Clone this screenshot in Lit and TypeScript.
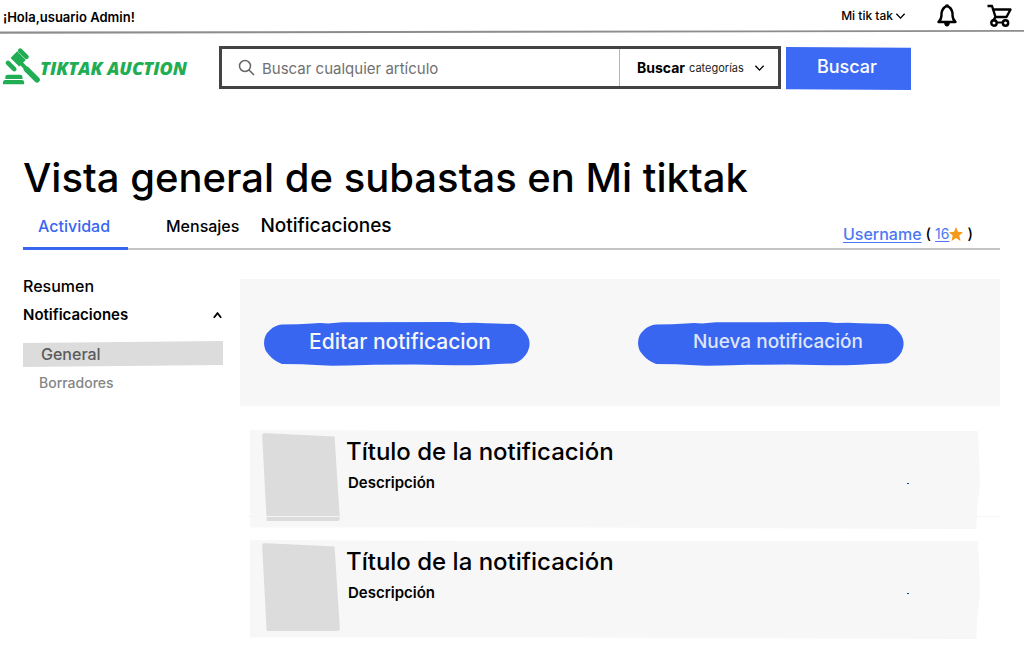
import { LitElement, html, css, svg, nothing } from "lit";
import { customElement, property } from "lit/decorators.js";

const chevronDown = html`<svg class="chev" viewBox="0 0 12 8" aria-hidden="true">
  <path d="M1.5 1.5 6 6.3 10.5 1.5" fill="none" stroke="currentColor" stroke-width="1.5" />
</svg>`;

const gavel = html`<svg class="gavel" viewBox="0 0 112 112" aria-hidden="true">
  <g fill="none" stroke="currentColor" stroke-linecap="round">
    <path d="M52 8 71 27M15 45 34 64" stroke-width="14" />
    <path d="M54 46 66 58" stroke-width="12" />
    <path d="M71 64 103 96" stroke-width="17" />
  </g>
  <path d="M43 10 69 36 49 56 23 30Z" fill="currentColor" />
  <path d="M14 81H52Q59 81 59 88V94H7V88Q7 81 14 81ZM7 97H57Q64 97 64 104V110H0V104Q0 97 7 97Z" fill="currentColor" />
</svg>`;

const pill = svg`<path d="M18 3.500 34 3.300 48 2.500 56 2 64 2.400 78 1.300 188 1 198 2 210 1.800 222 2.300 232 2.600 250 3Q256 5 261 11Q266 17 265.500 24Q265 31 259 37Q254 42 248 42.500L234 43 222 43.800 208 44.300 190 44.200 150 43.600 110 43.800 84 44.400 68 44.800 52 44 38 43.300 18 43Q10 40 5 34Q0 29 0 22Q0 14 6 9Q11 4 18 3.500Z" fill="currentColor" />`;

@customElement("notification-card")
export class NotificationCard extends LitElement {
  @property() heading = "";
  @property() description = "";
  @property({ type: Boolean }) ruled = false;

  static styles = css`
    :host {
      display: block;
      position: relative;
    }
    .card {
      display: flex;
      gap: 6px;
      min-height: 99px;
      box-sizing: border-box;
      padding: 3px 12px;
      background: #f7f7f7;
      clip-path: polygon(0 0, 40% 1px, 99.7% 1px, 99.8% 12%, 100% 55%, 99.6% 80%, 99.5% 100%, 45% 98.5%, 0 98.5%);
    }
    .thumb {
      flex: none;
      width: 78px;
      height: 88px;
      border-radius: 3px;
      background: #dcdcdc;
      clip-path: polygon(0 0, 93% 4%, 100% 100%, 6% 100%);
    }
    .text {
      flex: 1;
      display: flex;
      flex-direction: column;
      gap: 4px;
    }
    .title {
      margin: 0;
      padding-top: 4px;
      font-size: 24px;
      line-height: 30px;
      font-weight: 500;
    }
    .desc {
      margin: 0;
      display: flex;
      align-items: center;
      justify-content: space-between;
      padding: 0 59px 0 2px;
      font-size: 15px;
      line-height: 24px;
      font-weight: 600;
    }
    .mark {
      width: 2px;
      height: 1px;
      background: #124a86;
    }
    .line {
      position: absolute;
      left: -2px;
      right: -20px;
      bottom: 12px;
      height: 1px;
      background: #f5f5f5;
    }
  `;

  render() {
    return html`<article class="card">
        <div class="thumb"></div>
        <div class="text">
          <h2 class="title">${this.heading}</h2>
          <p class="desc">${this.description}<span class="mark"></span></p>
        </div>
      </article>
      ${this.ruled ? html`<div class="line"></div>` : nothing}`;
  }
}

@customElement("app-root")
export class AppRoot extends LitElement {
  static styles = css`
    :host {
      display: block;
      min-height: 100vh;
      background: #fff;
      color: #000;
      font-family: Inter, "Liberation Sans", sans-serif;
    }
    a {
      color: inherit;
      text-decoration: none;
    }
    button {
      border: 0;
      padding: 0;
      background: none;
      color: inherit;
      font: inherit;
      cursor: pointer;
    }
    .topbar {
      display: flex;
      align-items: center;
      height: 30px;
      padding: 0 11px 0 3px;
    }
    .hello {
      flex: 1;
      padding-top: 4px;
      font-size: 13px;
      line-height: 18px;
      font-weight: 600;
    }
    .account {
      display: flex;
      align-items: center;
      gap: 2px;
      margin-right: 30px;
      padding-top: 1px;
      font-size: 12px;
      line-height: 18px;
      font-weight: 500;
    }
    .chev {
      width: 11px;
      height: 8px;
    }
    .icon {
      display: block;
      height: 24px;
    }
    .bell {
      width: 22px;
      margin-right: 29px;
    }
    .cart {
      width: 26px;
    }
    .rule {
      height: 4px;
      background: #8d8d8d;
      clip-path: polygon(0 40%, 100% 0, 100% 45%, 0 95%);
    }
    .header {
      display: flex;
      align-items: center;
      padding: 12px 113px 0 3px;
    }
    .logo {
      display: flex;
      align-items: center;
      width: 216px;
      color: #21ad54;
      font-family: "Open Sans", Lato, sans-serif;
      font-size: 18px;
      line-height: 24px;
      font-weight: 800;
      font-style: italic;
      white-space: nowrap;
    }
    .gavel {
      flex: none;
      overflow: visible;
      width: 37px;
      height: 37px;
      margin-top: -4px;
    }
    .search {
      flex: 1;
      display: flex;
      gap: 5px;
    }
    .box {
      flex: 1;
      display: flex;
      box-sizing: border-box;
      height: 43px;
      border: 3px solid #434343;
    }
    .query {
      flex: 1;
      display: flex;
      align-items: center;
      gap: 7px;
      padding-left: 16px;
    }
    .lens {
      width: 17px;
      height: 17px;
      color: #666;
    }
    .field {
      flex: 1;
      min-width: 0;
      border: 0;
      padding: 2px 0 0;
      outline: 0;
      background: none;
      font: 400 15px/20px Inter, sans-serif;
      color: #333;
    }
    .field::placeholder {
      color: #707070;
      opacity: 1;
    }
    .cats {
      display: flex;
      align-items: center;
      width: 159px;
      box-sizing: border-box;
      padding: 0 13px 0 17px;
      border-left: 1px solid #b5b5b5;
      font-size: 12px;
      line-height: 18px;
    }
    .catlabel {
      font-size: 14px;
      font-weight: 700;
      margin-right: 4px;
    }
    .select {
      flex: 1;
      min-width: 0;
      appearance: none;
      border: 0;
      padding: 0;
      background: none;
      color: #222;
      font: 400 11px/18px Inter, sans-serif;
    }
    .go {
      width: 125px;
      height: 43px;
      margin-top: 1px;
      background: #3d6af4;
      color: #fff;
      font-size: 18px;
      font-weight: 500;
      padding: 0 3px 4px 0;
      clip-path: polygon(0 0, 100% 2%, 100% 100%, 0 98%);
    }
    .main {
      padding: 62px 24px 24px 23px;
    }
    .h1 {
      margin: 0;
      font-size: 40px;
      line-height: 52px;
      font-weight: 500;
    }
    .tabs {
      display: flex;
      align-items: flex-end;
      justify-content: space-between;
      height: 44px;
      border-bottom: 2px solid #c4c4c4;
    }
    .tablist {
      display: flex;
      align-items: flex-start;
      height: 46px;
      margin-bottom: -2px;
      font-size: 19px;
      line-height: 24px;
      font-weight: 500;
    }
    .tab {
      box-sizing: border-box;
      height: 46px;
      padding-top: 10px;
      margin-right: 21px;
    }
    .small {
      font-size: 16px;
    }
    .active {
      width: 105px;
      margin-right: 38px;
      padding-left: 15px;
      border-bottom: 3px solid #3866f0;
      color: #3866f0;
    }
    .user {
      display: flex;
      align-items: center;
      padding: 0 27px 3px 0;
      font-size: 15px;
      line-height: 22px;
      font-weight: 500;
      white-space: pre;
    }
    .link {
      color: #4b77f3;
      text-decoration: underline;
      text-underline-offset: 2px;
    }
    .name {
      font-size: 16px;
    }
    .thin {
      font-size: 14px;
      font-weight: 400;
    }
    .star {
      width: 14px;
      height: 14px;
      color: #f39a1b;
    }
    .body {
      display: grid;
      grid-template-columns: 200px minmax(0, 1fr);
      gap: 17px;
      padding-top: 29px;
    }
    .side {
      font-size: 16px;
      line-height: 20px;
      font-weight: 500;
    }
    .item {
      display: flex;
      align-items: center;
      justify-content: space-between;
      width: 100%;
      margin-top: -3px;
      margin-bottom: 12px;
    }
    .group {
      font-size: 15px;
      font-weight: 600;
    }
    .general {
      display: block;
      margin-top: 16px;
      padding: 3px 18px;
      background: #dcdcdc;
      color: #5b5b5b;
      clip-path: polygon(0 8%, 100% 0, 100% 92%, 0 100%);
    }
    .draft {
      display: block;
      padding: 6px 16px;
      color: #858585;
      font-size: 14px;
    }
    .panel {
      display: flex;
      flex-wrap: wrap;
      gap: 108px;
      box-sizing: border-box;
      min-height: 127px;
      padding: 42px 24px 30px;
      background: #f7f7f7;
    }
    .pill {
      position: relative;
      width: 266px;
      height: 46px;
      color: #3866f0;
      font-size: 21px;
      line-height: 24px;
      font-weight: 500;
    }
    .shape {
      position: absolute;
      inset: 0;
      width: 100%;
      height: 100%;
    }
    .pilltext {
      position: relative;
      display: block;
      padding: 0 0 4px 6px;
      color: #f6f6f6;
    }
    .soft {
      padding-left: 14px;
      font-size: 19px;
      color: #dfe5f8;
    }
    .list {
      display: flex;
      flex-direction: column;
      gap: 11px;
      padding: 24px 20px 0 10px;
    }
  `;

  render() {
    return html`
      <div class="topbar">
        <span class="hello">¡Hola,usuario Admin!</span>
        <button class="account" aria-haspopup="menu">Mi tik tak${chevronDown}</button>
        <button class="bell" aria-label="Avisos">
          <svg class="icon" viewBox="0 0 22 24" aria-hidden="true">
            <path d="M2.500 19Q5.500 16.500 5.500 12V10Q6.500 4.500 11 3Q15.500 4.500 16.500 10V12Q16.500 16.500 19.500 19Z" fill="none" stroke="#000" stroke-width="2.400" stroke-linejoin="round" />
            <path d="M8 19.500H14Q13.500 23.500 11 23.500Q8.500 23.500 8 19.500ZM9.500 3V1.500H12.500V3Z" />
          </svg>
        </button>
        <a class="cart" href="#carrito" aria-label="Carrito">
          <svg class="icon" viewBox="0 0 26 24" aria-hidden="true">
            <path d="M.5 3H5L8.500 14H19.500L23.500 6.500H6.500M8.500 14 6 18" fill="none" stroke="#000" stroke-width="2.400" stroke-linejoin="round" />
            <path d="M9 19.500H17" stroke="#000" stroke-width="2" />
            <circle cx="7" cy="20" r="2.700" fill="none" stroke="#000" stroke-width="2.400" />
            <circle cx="18.500" cy="20" r="2.700" fill="none" stroke="#000" stroke-width="2.400" />
          </svg>
        </a>
      </div>
      <div class="rule"></div>

      <header class="header">
        <a class="logo" href="#inicio">${gavel}TIKTAK AUCTION</a>
        <form class="search" @submit=${(e: Event) => e.preventDefault()}>
          <div class="box">
            <label class="query">
              <svg class="lens" viewBox="0 0 17 17" role="img" aria-label="Buscar">
                <circle cx="7" cy="7" r="5.500" fill="none" stroke="currentColor" stroke-width="1.500" />
                <path d="M11 11 16 16" stroke="currentColor" stroke-width="1.600" />
              </svg>
              <input class="field" type="text" placeholder="Buscar cualquier artículo" />
            </label>
            <div class="cats">
              <label class="catlabel" for="cat">Buscar</label>
              <select class="select" id="cat">
                <option>categorías</option>
              </select>
              ${chevronDown}
            </div>
          </div>
          <button class="go" type="submit">Buscar</button>
        </form>
      </header>

      <main class="main">
        <h1 class="h1">Vista general de subastas en Mi tiktak</h1>
        <div class="tabs">
          <nav class="tablist">
            <a class="tab small active" href="#actividad">Actividad</a>
            <a class="tab small" href="#mensajes">Mensajes</a>
            <a class="tab" href="#notificaciones">Notificaciones</a>
          </nav>
          <div class="user"><a class="link name" href="#usuario">Username</a> ( <a class="link thin" href="#votos">16</a><svg class="star" viewBox="0 0 14 14" aria-hidden="true"><path d="M7 0 9 4.800 14 5.200 10.300 8.500 11.500 14 7 11 2.500 14 3.700 8.500 0 5.200 5 4.800Z" fill="currentColor" /></svg> )</div>
        </div>

        <div class="body">
          <nav class="side">
            <a class="item" href="#resumen">Resumen</a>
            <button class="item group" aria-expanded="true">
              Notificaciones
              <svg class="chev" viewBox="0 0 12 8" aria-hidden="true">
                <path d="M2 7 6 2 10 7" fill="none" stroke="#000" stroke-width="2" />
              </svg>
            </button>
            <a class="general" href="#general">General</a>
            <a class="draft" href="#borradores">Borradores</a>
          </nav>
          <section>
            <div class="panel">
              <button class="pill">
                <svg class="shape" viewBox="0 0 266 46" preserveAspectRatio="none" aria-hidden="true">${pill}</svg>
                <span class="pilltext">Editar notificacion</span>
              </button>
              <button class="pill">
                <svg class="shape" viewBox="0 0 266 46" preserveAspectRatio="none" aria-hidden="true">${pill}</svg>
                <span class="pilltext soft">Nueva notificación</span>
              </button>
            </div>
            <div class="list">
              <notification-card ruled heading="Título de la notificación" description="Descripción"></notification-card>
              <notification-card heading="Título de la notificación" description="Descripción"></notification-card>
            </div>
          </section>
        </div>
      </main>
    `;
  }
}
